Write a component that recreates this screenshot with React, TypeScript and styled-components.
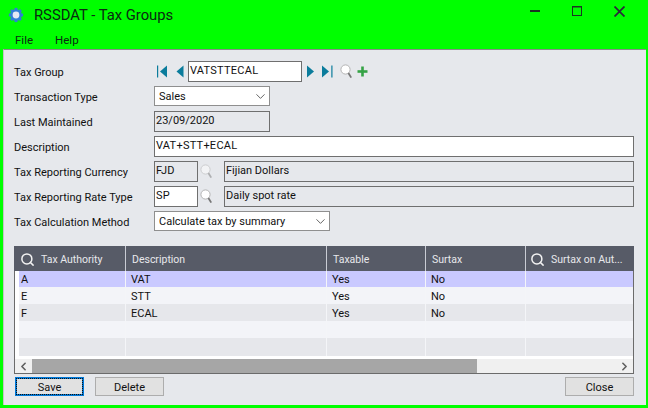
import React from 'react';
import styled, { createGlobalStyle } from 'styled-components';
import { Search, ChevronDown, ChevronLeft, ChevronRight } from 'lucide-react';

const GlobalStyle = createGlobalStyle`
  html, body {
    margin: 0;
    padding: 0;
    background: #00ff00;
  }
  body {
    font-family: Roboto, "Liberation Sans", sans-serif;
    font-size: 11px;
    color: #111;
  }
`;

const Win = styled.div`
  width: 648px;
  height: 408px;
  background: #00ff00;
  display: flex;
  flex-direction: column;
  overflow: hidden;
`;

const TitleBar = styled.div`
  height: 29px;
  display: flex;
  align-items: center;
  padding: 0 0 0 8px;
`;

const TitleText = styled.div`
  font-size: 14.8px;
  margin-left: 10px;
  padding-top: 1px;
  color: #0b2a12;
`;

const WinButtons = styled.div`
  margin-left: auto;
  margin-bottom: 7px;
  display: flex;
  align-items: center;
  padding-right: 23px;
  gap: 32px;
`;

const MenuBar = styled.div`
  height: 20px;
  display: flex;
  align-items: center;
  padding: 1px 0 0 15px;
  box-sizing: border-box;
  gap: 22px;
  font-size: 11.5px;
  color: #0b2a12;
`;

const Body = styled.div`
  flex: 1;
  margin: 0 2px 3px 3px;
  background: #e6e8ec;
  border-top: 1px solid #8a8a8a;
  border-left: 1px solid #c4c4c4;
  padding: 11px 12px 0 10px;
  display: flex;
  flex-direction: column;
`;

const FormRows = styled.div`
  display: grid;
  grid-auto-rows: 25px;
`;

const Row = styled.div`
  display: flex;
  align-items: flex-start;
`;

const Label = styled.div`
  width: 140px;
  height: 21px;
  line-height: 23px;
  flex: none;
`;

const Field = styled.div<{ $w?: number; $ro?: boolean; $ml?: number; $caps?: boolean }>`
  box-sizing: border-box;
  height: 21px;
  flex: ${(p) => (p.$w ? 'none' : '1')};
  width: ${(p) => (p.$w ? `${p.$w}px` : 'auto')};
  margin-left: ${(p) => p.$ml ?? 0}px;
  background: ${(p) => (p.$ro ? '#e6e8ec' : '#fff')};
  border: 1px solid #6f6f6f;
  line-height: 17px;
  letter-spacing: ${(p) => (p.$caps ? '0.25px' : '0')};
  padding-left: 1px;
  white-space: nowrap;
`;

const SelectBox = styled.div<{ $w: number }>`
  box-sizing: border-box;
  height: 20px;
  width: ${(p) => p.$w}px;
  background: #fff;
  border: 1px solid #8f8f8f;
  display: flex;
  align-items: center;
  justify-content: space-between;
  padding: 0 1px 0 4px;
`;

const NavGroup = styled.div`
  display: flex;
  align-items: center;
  height: 21px;
`;

const IconSlot = styled.span<{ $ml?: number }>`
  display: inline-flex;
  align-items: center;
  margin-left: ${(p) => p.$ml ?? 0}px;
  flex: none;
  height: 21px;
`;

const GridBox = styled.div`
  margin-top: 10px;
  height: 128px;
  box-sizing: border-box;
  background: #fff;
  border: 1px solid #6b6b6b;
  border-top: none;
  display: flex;
  flex-direction: column;
`;

const HeadRow = styled.div`
  height: 25px;
  margin: 0 -1px;
  background: #575b67;
  display: grid;
  grid-template-columns: 112px 201px 99px 100px 1fr;
  color: #e8e8ec;
  font-size: 10.5px;
  flex: none;
`;

const HeadCell = styled.div<{ $pl?: number }>`
  display: flex;
  align-items: center;
  gap: 6px;
  padding: 1px 0 0 ${(p) => p.$pl ?? 6}px;
  border-right: 1px solid #c9ccd4;
  white-space: nowrap;
  &:last-child {
    border-right: none;
  }
`;

const DataRow = styled.div<{ $bg: string; $h: number }>`
  height: ${(p) => p.$h}px;
  margin-left: 4px;
  flex: none;
  display: grid;
  grid-template-columns: 107px 201px 99px 100px 1fr;
  background: ${(p) => p.$bg};
  line-height: ${(p) => p.$h + 2}px;
`;

const DataCell = styled.div<{ $first?: boolean }>`
  padding-left: ${(p) => (p.$first ? 2 : 5)}px;
  border-right: 1px solid #f4f5f8;
  &:last-child {
    border-right: none;
  }
`;

const ScrollBar = styled.div`
  margin-top: auto;
  height: 14px;
  flex: none;
  display: flex;
  background: #f0f0f0;
  color: #606060;
`;

const ScrollBtn = styled.div<{ $end?: boolean }>`
  width: 17px;
  flex: none;
  margin-left: ${(p) => (p.$end ? 'auto' : '0')};
  display: flex;
  align-items: center;
  justify-content: center;
`;

const Thumb = styled.div`
  width: 445px;
  background: #a6a6a6;
`;

const Footer = styled.div`
  margin-top: 3px;
  padding: 0 0 0 1px;
  display: flex;
  gap: 11px;
`;

const Btn = styled.div<{ $focus?: boolean; $right?: boolean }>`
  box-sizing: border-box;
  width: 69px;
  height: 19px;
  padding-top: 2px;
  margin-left: ${(p) => (p.$right ? 'auto' : '0')};
  background: #e1e1e1;
  border: ${(p) => (p.$focus ? '1px solid #0078d7' : '1px solid #adadad')};
  outline: ${(p) => (p.$focus ? '1px dotted #111' : 'none')};
  outline-offset: -2px;
  box-shadow: ${(p) => (p.$focus ? 'inset 0 0 0 1px #0078d7' : 'none')};
  display: flex;
  align-items: center;
  justify-content: center;
  color: #111;
`;

const Gear = () => (
  <svg width="16" height="16" viewBox="0 0 18 18">
    <g fill="#2f7fd6">
      <circle cx="9" cy="9" r="6.6" />
      <rect x="7.4" y="1" width="3.2" height="16" />
      <rect x="1" y="7.4" width="16" height="3.2" />
      <rect x="7.4" y="1" width="3.2" height="16" transform="rotate(45 9 9)" />
      <rect x="7.4" y="1" width="3.2" height="16" transform="rotate(-45 9 9)" />
    </g>
    <circle cx="9" cy="9" r="3.8" fill="#e4e8f4" />
  </svg>
);

const teal = '#0b7c9c';

const NavFirst = () => (
  <svg width="11" height="13" viewBox="0 0 11 13">
    <rect x="0" y="0.5" width="1.2" height="12" fill={teal} />
    <polygon points="10,0.5 10,12.5 3,6.5" fill={teal} />
  </svg>
);

const NavPrev = () => (
  <svg width="8" height="13" viewBox="0 0 8 13">
    <polygon points="7.5,0.5 7.5,12.5 0.5,6.5" fill={teal} />
  </svg>
);

const NavNext = () => (
  <svg width="7" height="13" viewBox="0 0 7 13">
    <polygon points="0,0.5 0,12.5 7,6.5" fill={teal} />
  </svg>
);

const NavLast = () => (
  <svg width="11" height="13" viewBox="0 0 11 13">
    <polygon points="0,0.5 0,12.5 7,6.5" fill={teal} />
    <rect x="9.3" y="0.5" width="1.2" height="12" fill={teal} />
  </svg>
);

const Lens = ({ faded }: { faded?: boolean }) => (
  <svg width="13" height="15" viewBox="0 0 13 15" opacity={faded ? 0.5 : 1}>
    <circle cx="5.5" cy="5.5" r="4.6" fill="#fff" stroke="#b4b4b4" strokeWidth="1" />
    <line x1="8.4" y1="9" x2="11.2" y2="13.6" stroke="#777" strokeWidth="1.8" />
  </svg>
);

const Plus = () => (
  <svg width="11" height="11" viewBox="0 0 11 11">
    <rect x="4.2" y="0.5" width="2.6" height="10" fill="#35a245" />
    <rect x="0.5" y="4.2" width="10" height="2.6" fill="#35a245" />
  </svg>
);

const MinIcon = () => (
  <svg width="10" height="10" viewBox="0 0 10 10">
    <rect x="0" y="4" width="10" height="2" fill="#1c3324" />
  </svg>
);

const MaxIcon = () => (
  <svg width="10" height="10" viewBox="0 0 10 10">
    <rect x="0.5" y="0.5" width="9" height="9" fill="none" stroke="#1c3324" />
    <rect x="0" y="0" width="10" height="1.5" fill="#1c3324" />
  </svg>
);

const CloseIcon = () => (
  <svg width="11" height="11" viewBox="0 0 11 11">
    <path d="M0.5 0.5 L10.5 10.5 M10.5 0.5 L0.5 10.5" stroke="#2a2a3a" strokeWidth="1.8" />
  </svg>
);

const rows = [
  { a: 'A', d: 'VAT', t: 'Yes', s: 'No', bg: '#c9c9ff', h: 16 },
  { a: 'E', d: 'STT', t: 'Yes', s: 'No', bg: '#f3f4f8', h: 17 },
  { a: 'F', d: 'ECAL', t: 'Yes', s: 'No', bg: '#e6e7eb', h: 17 },
  { a: '', d: '', t: '', s: '', bg: '#f3f4f8', h: 17 },
  { a: '', d: '', t: '', s: '', bg: '#e6e7eb', h: 18 },
];

export default function App() {
  return (
    <Win>
      <GlobalStyle />
      <TitleBar>
        <Gear />
        <TitleText>RSSDAT - Tax Groups</TitleText>
        <WinButtons>
          <MinIcon />
          <MaxIcon />
          <CloseIcon />
        </WinButtons>
      </TitleBar>
      <MenuBar>
        <span>File</span>
        <span>Help</span>
      </MenuBar>
      <Body>
        <FormRows>
          <Row>
            <Label>Tax Group</Label>
            <NavGroup>
              <IconSlot $ml={3}>
                <NavFirst />
              </IconSlot>
              <IconSlot $ml={8}>
                <NavPrev />
              </IconSlot>
              <Field $w={114} $ml={4} $caps>VATSTTECAL</Field>
              <IconSlot $ml={5}>
                <NavNext />
              </IconSlot>
              <IconSlot $ml={8}>
                <NavLast />
              </IconSlot>
              <IconSlot $ml={7}>
                <Lens />
              </IconSlot>
              <IconSlot $ml={4}>
                <Plus />
              </IconSlot>
            </NavGroup>
          </Row>
          <Row>
            <Label>Transaction Type</Label>
            <SelectBox $w={116}>
              Sales
              <ChevronDown size={15} strokeWidth={1.2} color="#333" />
            </SelectBox>
          </Row>
          <Row>
            <Label>Last Maintained</Label>
            <Field $w={116} $ro>23/09/2020</Field>
          </Row>
          <Row>
            <Label>Description</Label>
            <Field $caps>VAT+STT+ECAL</Field>
          </Row>
          <Row>
            <Label>Tax Reporting Currency</Label>
            <Field $w={44} $ro $caps>FJD</Field>
            <IconSlot $ml={2}>
              <Lens faded />
            </IconSlot>
            <Field $ml={11} $ro>Fijian Dollars</Field>
          </Row>
          <Row>
            <Label>Tax Reporting Rate Type</Label>
            <Field $w={44} $caps>SP</Field>
            <IconSlot $ml={2}>
              <Lens />
            </IconSlot>
            <Field $ml={11} $ro>Daily spot rate</Field>
          </Row>
          <Row>
            <Label>Tax Calculation Method</Label>
            <SelectBox $w={176}>
              Calculate tax by summary
              <ChevronDown size={15} strokeWidth={1.2} color="#333" />
            </SelectBox>
          </Row>
        </FormRows>
        <GridBox>
          <HeadRow>
            <HeadCell>
              <Search size={15} strokeWidth={2.4} color="#f2f2f2" />
              Tax Authority
            </HeadCell>
            <HeadCell>Description</HeadCell>
            <HeadCell>Taxable</HeadCell>
            <HeadCell>Surtax</HeadCell>
            <HeadCell $pl={4}>
              <Search size={15} strokeWidth={2.4} color="#f2f2f2" />
              Surtax on Aut...
            </HeadCell>
          </HeadRow>
          {rows.map((r, i) => (
            <DataRow key={i} $bg={r.bg} $h={r.h}>
              <DataCell $first>{r.a}</DataCell>
              <DataCell>{r.d}</DataCell>
              <DataCell>{r.t}</DataCell>
              <DataCell>{r.s}</DataCell>
              <DataCell />
            </DataRow>
          ))}
          <ScrollBar>
            <ScrollBtn>
              <ChevronLeft size={13} strokeWidth={3} />
            </ScrollBtn>
            <Thumb />
            <ScrollBtn $end>
              <ChevronRight size={13} strokeWidth={3} />
            </ScrollBtn>
          </ScrollBar>
        </GridBox>
        <Footer>
          <Btn $focus>Save</Btn>
          <Btn>Delete</Btn>
          <Btn $right>Close</Btn>
        </Footer>
      </Body>
    </Win>
  );
}
